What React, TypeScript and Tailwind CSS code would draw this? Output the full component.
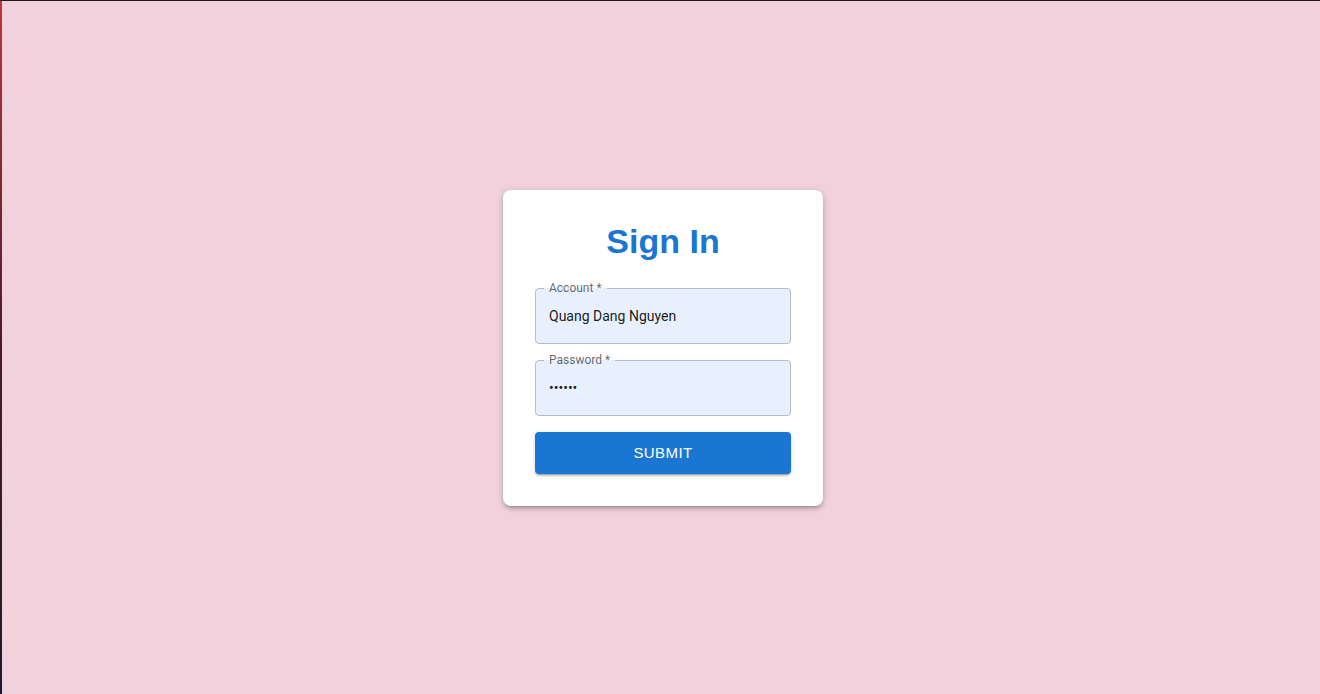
import React from "react";

function Field({ label, value, type = "text" }: { label: string; value: string; type?: string }) {
  return (
    <div className="relative h-[56px] rounded-[4px] border border-[#b4bccb] bg-[#e8f0fe]">
      <span
        className="absolute -top-[8px] left-[8px] bg-gradient-to-b from-white from-50% to-[#e8f0fe] to-50% px-[5px] text-[12px] leading-[14px] text-[rgba(0,0,0,0.6)]"
        style={{ fontFamily: "Roboto, Arial, sans-serif" }}
      >
        {label} *
      </span>
      <input
        type={type}
        readOnly
        defaultValue={value}
        className="h-full w-full bg-transparent px-[13px] pt-[1px] text-[14px] text-[rgba(0,0,0,0.9)] outline-none"
        style={{ fontFamily: "Roboto, Arial, sans-serif" }}
      />
    </div>
  );
}

export default function App() {
  return (
    <div className="flex h-[694px] w-[1320px] flex-col overflow-hidden bg-[#f1d1dc]">
      <div className="h-[1px] w-full bg-[#1a1a1a]" />
      <div className="flex flex-1">
        <div className="w-[2px] bg-gradient-to-b from-[#c0343e] via-[#4a1a2a] to-[#1a1a2a]" />
        <div className="flex flex-1 items-center justify-center pl-[4px]">
          <div className="flex w-[320px] flex-col rounded-[8px] bg-white px-[32px] py-[32px] shadow-[0_3px_3px_-2px_rgba(0,0,0,0.2),0_3px_4px_0_rgba(0,0,0,0.14),0_1px_8px_0_rgba(0,0,0,0.12)]">
            <h1
              className="h-[42px] text-center text-[34px] font-bold leading-[38px] text-[#1976d2]"
              style={{ fontFamily: '"Liberation Sans", Arial, sans-serif' }}
            >
              Sign In
            </h1>
            <div className="mt-[24px] flex flex-col gap-[16px]">
              <Field label="Account" value="Quang Dang Nguyen" />
              <Field label="Password" value="123456" type="password" />
              <button
                className="h-[42px] rounded-[4px] bg-[#1976d2] pt-[2px] text-[15px] uppercase tracking-[0.43px] text-white shadow-[0_3px_1px_-2px_rgba(0,0,0,0.2),0_2px_2px_0_rgba(0,0,0,0.14),0_1px_5px_0_rgba(0,0,0,0.12)]"
                style={{ fontFamily: '"Liberation Sans", Arial, sans-serif' }}
              >
                Submit
              </button>
            </div>
          </div>
        </div>
      </div>
    </div>
  );
}
